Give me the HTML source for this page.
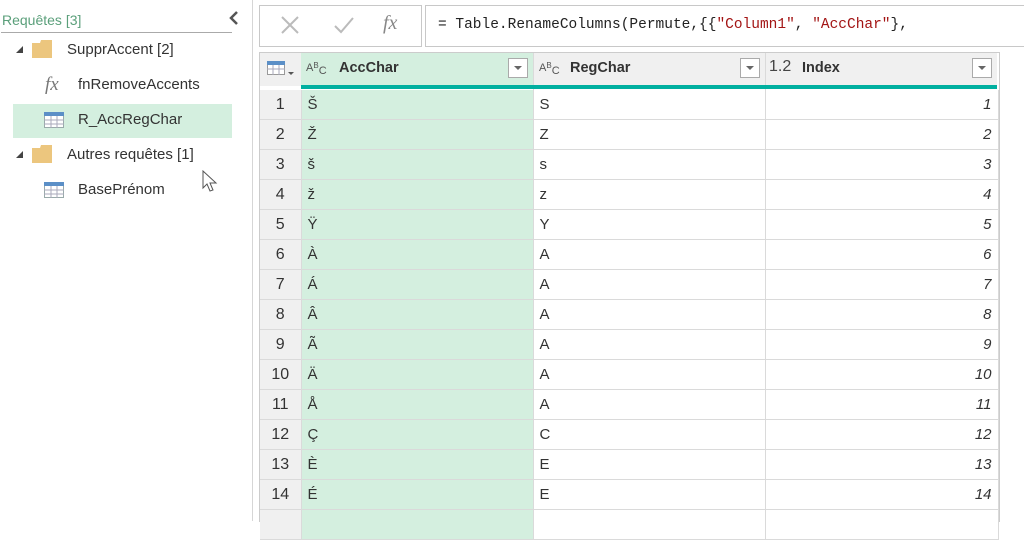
<!DOCTYPE html><html><head><meta charset="utf-8"><style>
body{margin:0;width:1024px;height:521px;overflow:hidden;background:#fff;font-family:"Segoe UI","Liberation Sans",sans-serif;position:relative}
.a{position:absolute}
.q{font-size:15px;color:#333}
td{border-right:1px solid #dadada;border-bottom:1px solid #dadada;height:29px;padding:0 6px;font-size:15px;color:#333}
td:first-child{text-align:center!important;padding:0}
table{border-collapse:collapse;table-layout:fixed}
.t{font-size:11px;color:#555;line-height:1}
</style></head><body>
<div class="a" style="left:2px;top:12px;font-size:14px;color:#5a9f7a">Requêtes [3]</div>
<div class="a" style="left:1px;top:32px;width:231px;height:1px;background:#aaa"></div>
<svg class="a" style="left:228px;top:10px" width="12" height="16"><path d="M9 2L3 8L9 14" stroke="#555" stroke-width="2.5" fill="none"/></svg>
<div class="a" style="left:252px;top:0;width:1px;height:521px;background:#d6d6d6"></div>
<svg class="a" style="left:16px;top:46px" width="8" height="8"><path d="M7 0V7H0Z" fill="#444"/></svg>
<svg class="a" style="left:32px;top:40px" width="22" height="18"><path d="M0 3H8L9 0H20V18H0Z" fill="#ecc67e"/></svg>
<div class="a q" style="left:67px;top:41px">SupprAccent [2]</div>
<div class="a" style="left:45px;top:74px;font-family:'Liberation Serif',serif;font-style:italic;font-size:19px;color:#777">fx</div>
<div class="a q" style="left:78px;top:76px">fnRemoveAccents</div>
<div class="a" style="left:13px;top:104px;width:219px;height:34px;background:#d4efdf"></div>
<svg class="a" style="left:44px;top:112px" width="20" height="16"><rect x="0.5" y="0.5" width="19" height="15" fill="#fff" stroke="#9aa"/><rect x="0" y="0" width="20" height="4" fill="#5b8fc7"/><path d="M0 8H20M0 12H20M7 4V16M13 4V16" stroke="#aab" stroke-width="1"/></svg>
<div class="a q" style="left:78px;top:111px">R_AccRegChar</div>
<svg class="a" style="left:16px;top:151px" width="8" height="8"><path d="M7 0V7H0Z" fill="#444"/></svg>
<svg class="a" style="left:32px;top:145px" width="22" height="18"><path d="M0 3H8L9 0H20V18H0Z" fill="#ecc67e"/></svg>
<div class="a q" style="left:67px;top:146px">Autres requêtes [1]</div>
<svg class="a" style="left:44px;top:182px" width="20" height="16"><rect x="0.5" y="0.5" width="19" height="15" fill="#fff" stroke="#9aa"/><rect x="0" y="0" width="20" height="4" fill="#5b8fc7"/><path d="M0 8H20M0 12H20M7 4V16M13 4V16" stroke="#aab" stroke-width="1"/></svg>
<div class="a q" style="left:78px;top:181px">BasePrénom</div>
<svg class="a" style="left:202px;top:170px" width="18" height="24"><path d="M1 1V18L5 14L8 21L11 20L8 13H14Z" fill="#fff" stroke="#555"/></svg>
<div class="a" style="left:259px;top:5px;width:161px;height:40px;border:1px solid #c8c8c8;background:#fff"></div>
<svg class="a" style="left:280px;top:15px" width="20" height="20"><path d="M2 2L18 18M18 2L2 18" stroke="#bbb" stroke-width="2"/></svg>
<svg class="a" style="left:333px;top:15px" width="22" height="20"><path d="M2 11L8 17L20 3" stroke="#bbb" stroke-width="2" fill="none"/></svg>
<div class="a" style="left:383px;top:12px;font-family:'Liberation Serif',serif;font-style:italic;font-size:20px;color:#888">fx</div>
<div class="a" style="left:425px;top:5px;width:600px;height:40px;border:1px solid #c8c8c8;border-right:none;background:#fff"></div>
<div class="a" style="left:438px;top:17px;font-family:'Liberation Mono',monospace;font-size:14.5px;color:#222;white-space:pre">= Table.RenameColumns(Permute,{{<span style="color:#a31515">"Column1"</span>, <span style="color:#a31515">"AccChar"</span>},</div>
<div class="a" style="left:259px;top:52px;width:739px;height:469px;border-left:1px solid #ccc;border-right:1px solid #ccc;border-top:1px solid #ccc;background:#fff"></div>
<div class="a" style="left:260px;top:53px;width:41px;height:33px;background:#f0f0f0"></div>
<div class="a" style="left:301px;top:53px;width:232px;height:33px;background:#d4efdf"></div>
<div class="a" style="left:534px;top:53px;width:463px;height:33px;background:#f0f0f0"></div>
<div class="a" style="left:533px;top:53px;width:1px;height:468px;background:#dadada"></div>
<div class="a" style="left:765px;top:53px;width:1px;height:468px;background:#dadada"></div>
<div class="a" style="left:301px;top:85px;width:696px;height:4px;background:#01b0a0"></div>
<svg class="a" style="left:267px;top:61px" width="28" height="16"><rect x="0.5" y="0.5" width="17" height="13" fill="#fff" stroke="#999"/><rect x="0" y="0" width="18" height="4" fill="#5b8fc7"/><path d="M0 8H18M6 4V14M12 4V14" stroke="#aab"/><path d="M21 11H27L24 14Z" fill="#555"/></svg>
<div class="a t" style="left:306px;top:63px">A<span style="font-size:8px;position:relative;top:-3px">B</span><span style="position:relative;top:3px">C</span></div>
<div class="a" style="left:339px;top:60px;font-size:14.5px;font-weight:bold;color:#333">AccChar</div>
<div class="a t" style="left:539px;top:63px">A<span style="font-size:8px;position:relative;top:-3px">B</span><span style="position:relative;top:3px">C</span></div>
<div class="a" style="left:570px;top:60px;font-size:14.5px;font-weight:bold;color:#333">RegChar</div>
<div class="a" style="left:769px;top:58px;font-size:16px;color:#444">1.2</div>
<div class="a" style="left:802px;top:60px;font-size:14.5px;font-weight:bold;color:#333">Index</div>
<svg class="a" style="left:508px;top:58px" width="20" height="20"><rect x="0.5" y="0.5" width="19" height="19" fill="#fff" stroke="#aaa"/><path d="M6 8H14L10 12Z" fill="#666"/></svg>
<svg class="a" style="left:740px;top:58px" width="20" height="20"><rect x="0.5" y="0.5" width="19" height="19" fill="#fff" stroke="#aaa"/><path d="M6 8H14L10 12Z" fill="#666"/></svg>
<svg class="a" style="left:972px;top:58px" width="20" height="20"><rect x="0.5" y="0.5" width="19" height="19" fill="#fff" stroke="#aaa"/><path d="M6 8H14L10 12Z" fill="#666"/></svg>
<table class="a" style="left:260px;top:90px;width:738px">
<colgroup><col style="width:41px"><col style="width:232px"><col style="width:232px"><col style="width:233px"></colgroup>
<tbody>
<tr><td style="background:#f0f0f0;font-size:16px">1</td><td style="background:#d4efdf">Š</td><td>S</td><td style="text-align:right;font-style:italic">1</td></tr>
<tr><td style="background:#f0f0f0;font-size:16px">2</td><td style="background:#d4efdf">Ž</td><td>Z</td><td style="text-align:right;font-style:italic">2</td></tr>
<tr><td style="background:#f0f0f0;font-size:16px">3</td><td style="background:#d4efdf">š</td><td>s</td><td style="text-align:right;font-style:italic">3</td></tr>
<tr><td style="background:#f0f0f0;font-size:16px">4</td><td style="background:#d4efdf">ž</td><td>z</td><td style="text-align:right;font-style:italic">4</td></tr>
<tr><td style="background:#f0f0f0;font-size:16px">5</td><td style="background:#d4efdf">Ÿ</td><td>Y</td><td style="text-align:right;font-style:italic">5</td></tr>
<tr><td style="background:#f0f0f0;font-size:16px">6</td><td style="background:#d4efdf">À</td><td>A</td><td style="text-align:right;font-style:italic">6</td></tr>
<tr><td style="background:#f0f0f0;font-size:16px">7</td><td style="background:#d4efdf">Á</td><td>A</td><td style="text-align:right;font-style:italic">7</td></tr>
<tr><td style="background:#f0f0f0;font-size:16px">8</td><td style="background:#d4efdf">Â</td><td>A</td><td style="text-align:right;font-style:italic">8</td></tr>
<tr><td style="background:#f0f0f0;font-size:16px">9</td><td style="background:#d4efdf">Ã</td><td>A</td><td style="text-align:right;font-style:italic">9</td></tr>
<tr><td style="background:#f0f0f0;font-size:16px">10</td><td style="background:#d4efdf">Ä</td><td>A</td><td style="text-align:right;font-style:italic">10</td></tr>
<tr><td style="background:#f0f0f0;font-size:16px">11</td><td style="background:#d4efdf">Å</td><td>A</td><td style="text-align:right;font-style:italic">11</td></tr>
<tr><td style="background:#f0f0f0;font-size:16px">12</td><td style="background:#d4efdf">Ç</td><td>C</td><td style="text-align:right;font-style:italic">12</td></tr>
<tr><td style="background:#f0f0f0;font-size:16px">13</td><td style="background:#d4efdf">È</td><td>E</td><td style="text-align:right;font-style:italic">13</td></tr>
<tr><td style="background:#f0f0f0;font-size:16px">14</td><td style="background:#d4efdf">É</td><td>E</td><td style="text-align:right;font-style:italic">14</td></tr>
<tr><td style="background:#f0f0f0"></td><td style="background:#d4efdf"></td><td></td><td></td></tr>
</tbody></table>
</body></html>
